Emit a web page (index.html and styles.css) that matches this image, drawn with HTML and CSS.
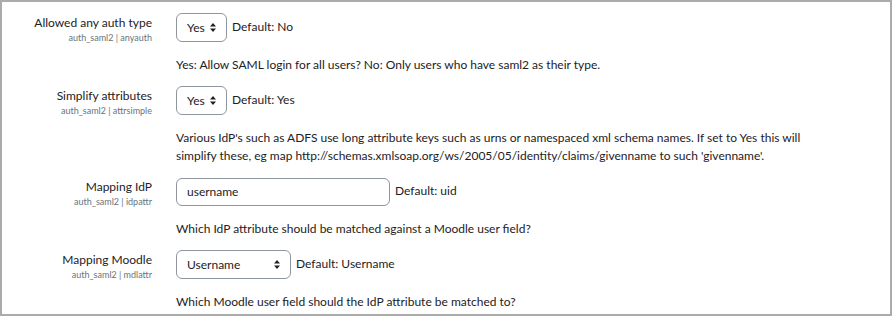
FILE: index.html
```html
<!DOCTYPE html>
<html lang="en">
<head>
<meta charset="utf-8">
<title>auth_saml2 settings</title>
<link rel="stylesheet" href="styles.css">
</head>
<body>
<div class="frame">
  <div class="setting">
    <div class="label">
      <div class="title">Allowed any auth type</div>
      <div class="key">auth_saml2 | anyauth</div>
    </div>
    <div class="content">
      <div class="control">
        <div class="select sel-yes"><span>Yes</span><svg class="arrows" width="6" height="9" viewBox="0 0 6 9"><path d="M0 3.5L3 0L6 3.5Z M0 5.5L3 9L6 5.5Z" fill="#1d2125"/></svg></div>
        <span class="default">Default: No</span>
      </div>
      <div class="desc">Yes: Allow SAML login for all users? No: Only users who have saml2 as their type.</div>
    </div>
  </div>
  <div class="setting">
    <div class="label">
      <div class="title">Simplify attributes</div>
      <div class="key">auth_saml2 | attrsimple</div>
    </div>
    <div class="content">
      <div class="control">
        <div class="select sel-yes"><span>Yes</span><svg class="arrows" width="6" height="9" viewBox="0 0 6 9"><path d="M0 3.5L3 0L6 3.5Z M0 5.5L3 9L6 5.5Z" fill="#1d2125"/></svg></div>
        <span class="default">Default: Yes</span>
      </div>
      <div class="desc">Various IdP's such as ADFS use long attribute keys such as urns or namespaced xml schema names. If set to Yes this will<br>simplify these, eg map http://schemas.xmlsoap.org/ws/2005/05/identity/claims/givenname to such 'givenname'.</div>
    </div>
  </div>
  <div class="setting">
    <div class="label">
      <div class="title">Mapping IdP</div>
      <div class="key">auth_saml2 | idpattr</div>
    </div>
    <div class="content">
      <div class="control">
        <div class="input">username</div>
        <span class="default">Default: uid</span>
      </div>
      <div class="desc">Which IdP attribute should be matched against a Moodle user field?</div>
    </div>
  </div>
  <div class="setting">
    <div class="label">
      <div class="title">Mapping Moodle</div>
      <div class="key">auth_saml2 | mdlattr</div>
    </div>
    <div class="content">
      <div class="control">
        <div class="select sel-user"><span>Username</span><svg class="arrows" width="6" height="9" viewBox="0 0 6 9"><path d="M0 3.5L3 0L6 3.5Z M0 5.5L3 9L6 5.5Z" fill="#1d2125"/></svg></div>
        <span class="default">Default: Username</span>
      </div>
      <div class="desc">Which Moodle user field should the IdP attribute be matched to?</div>
    </div>
  </div>
</div>
</body>
</html>
```
FILE: styles.css
```css
html, body {
  margin: 0;
  padding: 0;
  background: #ffffff;
}
body {
  font-family: Lato, "Liberation Sans", sans-serif;
  font-size: 12px;
  color: #1d2125;
}
.frame {
  box-sizing: border-box;
  width: 892px;
  height: 316px;
  border: 2px solid #ababab;
  padding-top: 11px;
  overflow: hidden;
}
.setting {
  display: grid;
  grid-template-columns: 150px 1fr;
  column-gap: 24px;
  margin-bottom: 12px;
}
.label {
  text-align: right;
  padding-top: 1px;
}
.title {
  line-height: 18px;
}
.key {
  font-size: 9px;
  line-height: 11px;
  color: #6a737b;
}
.control {
  display: flex;
  align-items: center;
  gap: 5px;
  height: 29px;
}
.select, .input {
  box-sizing: border-box;
  display: flex;
  align-items: center;
  border: 1px solid #8f959e;
  border-radius: 6px;
  padding-left: 10px;
  background: #fff;
}
.select {
  height: 29px;
  justify-content: space-between;
  padding-right: 10px;
}
.sel-yes { width: 51px; }
.sel-user { width: 115px; }
.input {
  width: 214px;
  height: 28px;
}
.arrows {
  display: block;
}
.default {
  line-height: 18px;
  margin-top: -2px;
}
.desc {
  margin-top: 14px;
  line-height: 18px;
}
```
